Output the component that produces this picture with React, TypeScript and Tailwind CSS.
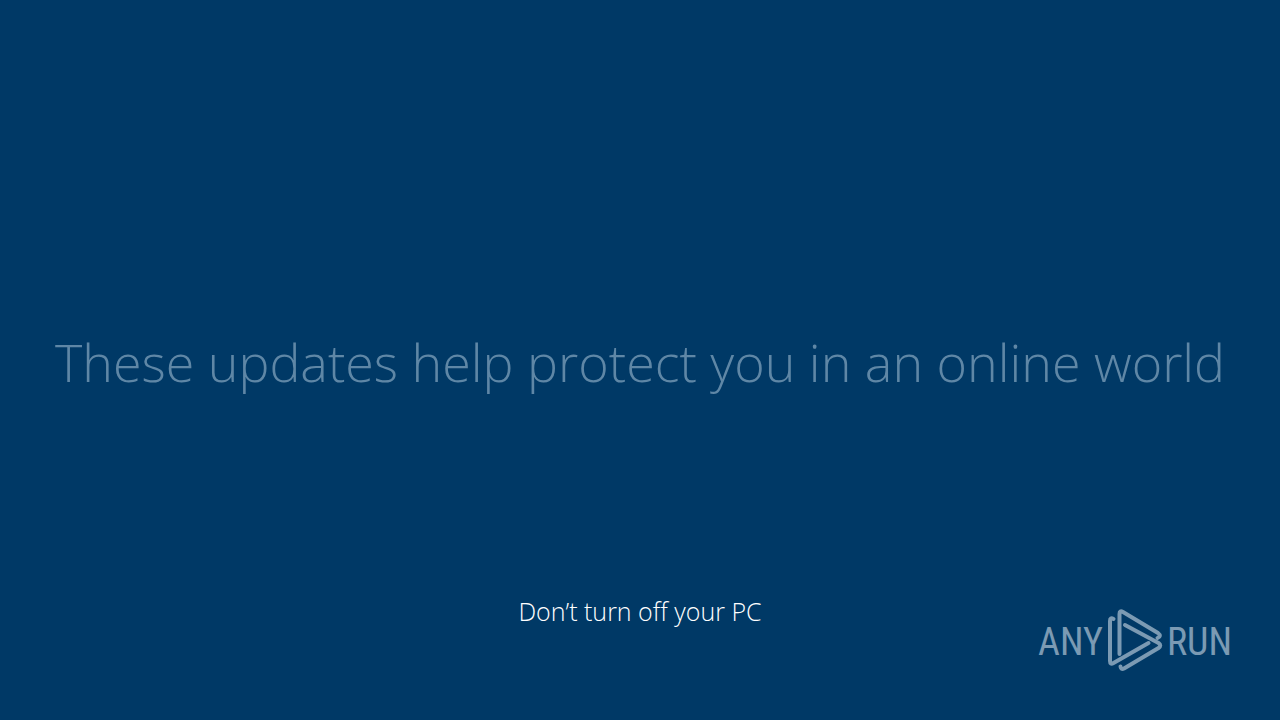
function PlayMark() {
  return (
    <svg
      aria-hidden="true"
      className="h-16 w-14 shrink-0"
      viewBox="0 0 56 64"
      fill="none"
      stroke="currentColor"
      strokeWidth="4"
      strokeLinecap="round"
      strokeLinejoin="round"
    >
      <path d="M6.5 11Q3 9 3 13V53Q3 57 6.5 55L41.5 35" />
      <path d="M12.5 46V6Q12.5 2 16 4L51 25Q55 28 50.5 30" />
      <path d="M18 17L51.5 35Q55 37.5 51.5 40L17 60.5Q14 62 13.500 58.5" />
    </svg>
  );
}

export default function App() {
  return (
    <main className="grid min-h-screen grid-rows-[1fr_auto_1fr] bg-[#003966] font-['Open_Sans','Noto_Sans',sans-serif]">
      <div />
      <h1 className="pt-1 text-center text-[52px] leading-[72px] font-light whitespace-nowrap text-[#5f87a6]">
        These updates help protect you in an online world
      </h1>
      <footer className="grid grid-cols-[1fr_auto_1fr] items-end pb-12">
        <p className="col-start-2 pb-[45px] text-[25px] leading-8 font-light text-white">Don’t turn off your PC</p>
        <div
          aria-label="ANY RUN"
          role="group"
          className="mr-12 flex items-center gap-1 justify-self-end font-['Roboto_Condensed','Open_Sans',sans-serif] text-[38px] leading-10 text-[#7b9ab3]"
        >
          <span className="pt-1">ANY</span>
          <PlayMark />
          <span className="pt-1">RUN</span>
        </div>
      </footer>
    </main>
  );
}
